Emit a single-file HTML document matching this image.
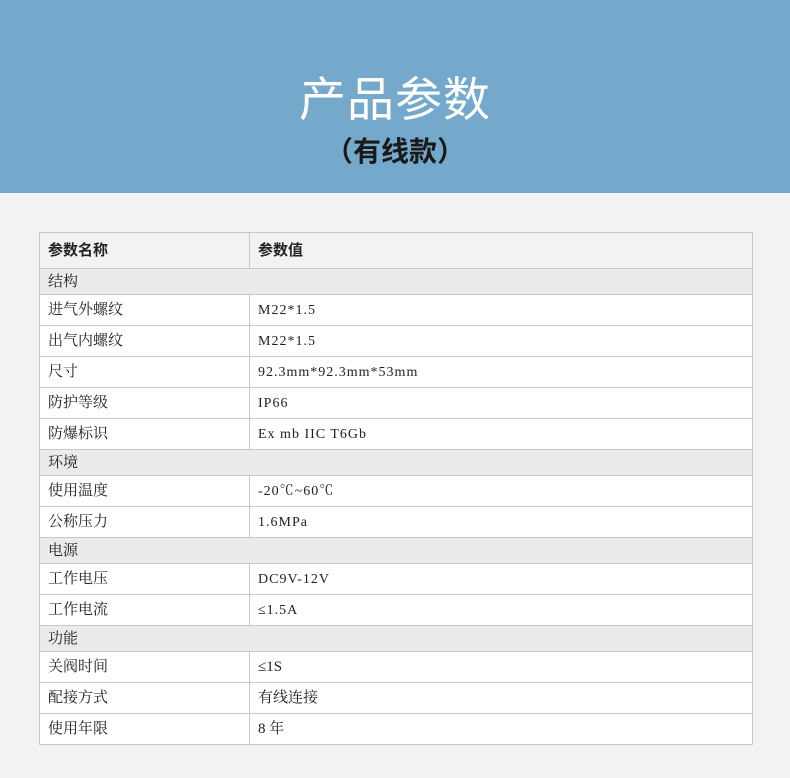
<!DOCTYPE html>
<html><head><meta charset="utf-8"><style>
html,body{margin:0;padding:0;}
body{width:790px;height:778px;background:#f2f2f2;position:relative;overflow:hidden;font-family:"Liberation Serif","Noto Serif CJK SC",serif;}
.top{position:absolute;left:0;top:0;width:790px;height:193px;background:#75a9cc;}
.t1{position:absolute;left:0;width:790px;text-align:center;top:70px;font:400 47px/60px "Liberation Sans","Noto Sans CJK SC",sans-serif;color:#fff;letter-spacing:1px;}
.t2{position:absolute;left:0;width:790px;text-align:center;top:132px;font:700 28px/40px "Liberation Sans","Noto Sans CJK SC",sans-serif;color:#1a1a1a;}
table{position:absolute;left:39px;top:232px;width:714px;border-collapse:collapse;font-size:15px;color:#222;}
td{border:1px solid #c8c8c8;padding:0 0 0 8px;background:#fff;vertical-align:middle;line-height:20px;}
td.a{width:201px;}
tr.h td{background:#f2f2f2;font-family:"Liberation Sans","Noto Sans CJK SC",sans-serif;font-weight:700;height:35px;}
tr.s td{background:#ebebeb;height:25px;}
tr.r td{height:30px;}
.m{font-family:"Liberation Serif","Noto Serif CJK SC",serif;font-size:14px;letter-spacing:1px;}
.m span{position:relative;top:1px;}
</style></head><body>
<div class="top"></div>
<div class="t1">产品参数</div>
<div class="t2">（有线款）</div>
<table>
<tr class="h"><td class="a">参数名称</td><td>参数值</td></tr>
<tr class="s"><td colspan="2">结构</td></tr>
<tr class="r"><td class="a">进气外螺纹</td><td class="m"><span>M22*1.5</span></td></tr>
<tr class="r"><td class="a">出气内螺纹</td><td class="m"><span>M22*1.5</span></td></tr>
<tr class="r"><td class="a">尺寸</td><td class="m"><span>92.3mm*92.3mm*53mm</span></td></tr>
<tr class="r"><td class="a">防护等级</td><td class="m"><span>IP66</span></td></tr>
<tr class="r"><td class="a">防爆标识</td><td class="m"><span>Ex mb IIC T6Gb</span></td></tr>
<tr class="s"><td colspan="2">环境</td></tr>
<tr class="r"><td class="a">使用温度</td><td class="m"><span>-20℃~60℃</span></td></tr>
<tr class="r"><td class="a">公称压力</td><td class="m"><span>1.6MPa</span></td></tr>
<tr class="s"><td colspan="2">电源</td></tr>
<tr class="r"><td class="a">工作电压</td><td class="m"><span>DC9V-12V</span></td></tr>
<tr class="r"><td class="a">工作电流</td><td class="m"><span>≤1.5A</span></td></tr>
<tr class="s"><td colspan="2">功能</td></tr>
<tr class="r"><td class="a">关阀时间</td><td>≤1S</td></tr>
<tr class="r"><td class="a">配接方式</td><td>有线连接</td></tr>
<tr class="r"><td class="a">使用年限</td><td>8 年</td></tr>
</table>
</body></html>
